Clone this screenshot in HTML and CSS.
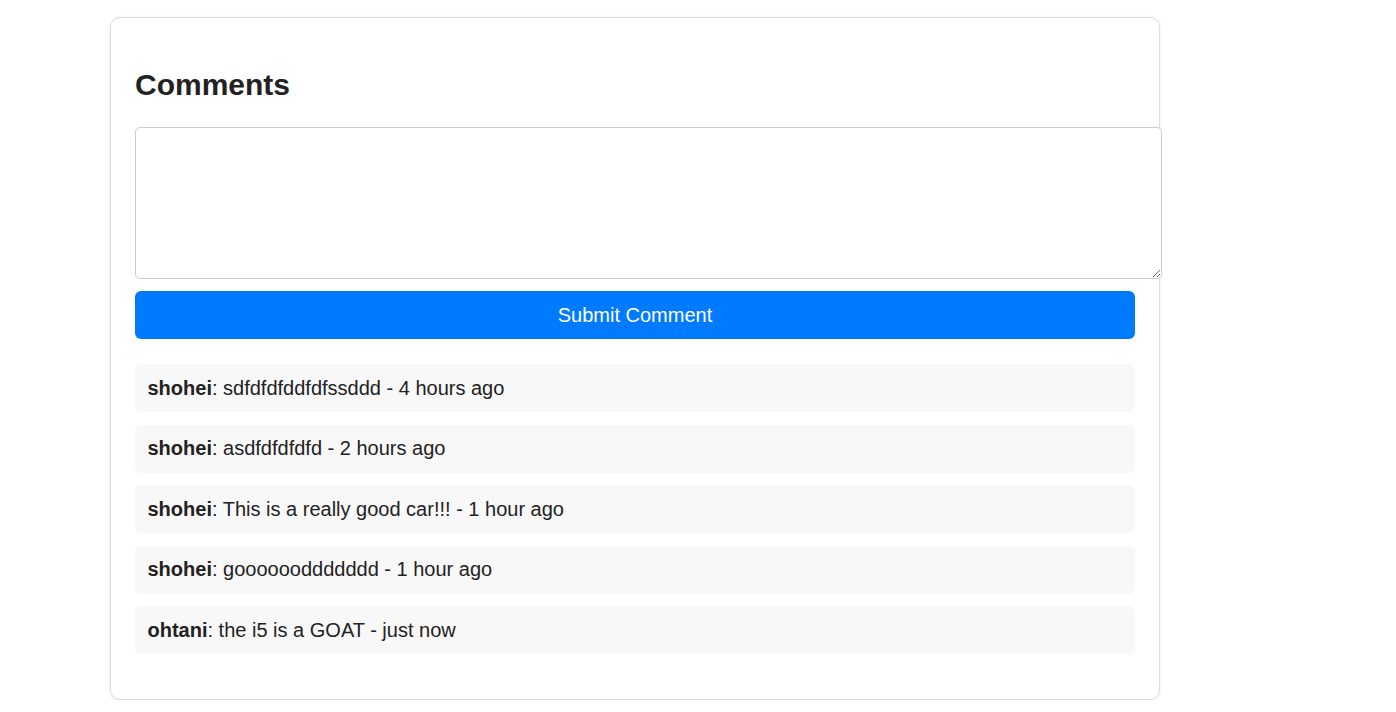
FILE: index.html
```html
<!DOCTYPE html>
<html lang="en">
<head>
<meta charset="utf-8">
<title>Comments</title>
<link rel="stylesheet" href="styles.css">
</head>
<body>
<div class="card">
  <h2 class="title">Comments</h2>
  <form class="comment-form">
    <textarea class="comment-input"></textarea>
    <button type="button" class="submit-btn">Submit Comment</button>
  </form>
  <ul class="comment-list">
    <li class="comment"><strong>shohei</strong>: sdfdfdfddfdfssddd - 4 hours ago</li>
    <li class="comment"><strong>shohei</strong>: asdfdfdfdfd - 2 hours ago</li>
    <li class="comment"><strong>shohei</strong>: This is a really good car!!! - 1 hour ago</li>
    <li class="comment"><strong>shohei</strong>: gooooooddddddd - 1 hour ago</li>
    <li class="comment"><strong>ohtani</strong>: the i5 is a GOAT - just now</li>
  </ul>
</div>
</body>
</html>
```

FILE: styles.css
```css
html, body {
  margin: 0;
  padding: 0;
  background: #ffffff;
}

body {
  font-family: "Liberation Sans", Arial, sans-serif;
  color: #222222;
  font-size: 20px;
}

.card {
  width: 1000px;
  margin: 17px 0 0 110px;
  padding: 24px 24px 45px 24px;
  border: 1px solid #dcdcdc;
  border-radius: 10px;
  box-shadow: 0 1px 4px rgba(0, 0, 0, 0.08);
  background: #fff;
}

.title {
  font-size: 30px;
  font-weight: bold;
  margin: 26px 0 25px 0;
  color: #222;
}

.comment-form {
  margin: 0;
}

.comment-input {
  display: block;
  width: 100%;
  height: 125px;
  padding: 12.5px;
  border: 1.25px solid #cccccc;
  border-radius: 5px;
  font-family: "Liberation Sans", Arial, sans-serif;
  font-size: 20px;
  margin: 0 0 12px 0;
  background: #fff;
}

.submit-btn {
  display: block;
  width: 100%;
  height: 48px;
  padding: 0;
  border: none;
  border-radius: 6px;
  background: #007bff;
  color: #ffffff;
  font-family: "Liberation Sans", Arial, sans-serif;
  font-size: 20px;
  cursor: pointer;
}

.comment-list {
  list-style: none;
  margin: 25px 0 0 0;
  padding: 0;
}

.comment {
  background: #f8f8f8;
  border-radius: 6px;
  padding: 12.5px;
  line-height: 23px;
  margin-bottom: 12.5px;
}

.comment:last-child {
  margin-bottom: 0;
}

.comment strong {
  font-weight: bold;
}
```
